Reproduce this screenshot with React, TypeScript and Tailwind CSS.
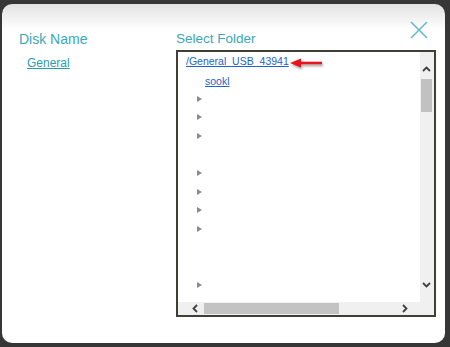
import React from "react";

const rows = [true, true, true, false, true, true, true, true, false, false, true];

function Tri() {
  return (
    <div className="w-0 h-0 border-l-[5px] border-l-[#8a8a8a] border-y-[3.5px] border-y-transparent" />
  );
}

export default function App() {
  return (
    <div className="w-[450px] h-[347px] bg-[#363636] pt-[4px] pl-[2px] pr-[5px] pb-[4px] font-['Liberation_Sans',Arial,sans-serif]">
      <div className="relative h-full w-full rounded-[10px] bg-[linear-gradient(to_bottom,#e2e2e2,#ffffff_26px,#ffffff)] flex pl-[17px] pt-[27px]">
        {/* Left column */}
        <div className="w-[157px] flex flex-col">
          <div className="text-[14px] leading-[16px] text-[#3aa8b7]">Disk Name</div>
          <div className="mt-[8.5px] pl-[8px] text-[12px] leading-[14px] text-[#2c9dac] underline">General</div>
        </div>

        {/* Right column */}
        <div className="w-[260px] flex flex-col">
          <div className="text-[13.5px] leading-[16px] text-[#3aa8b7]">Select Folder</div>
          <div className="mt-[3px] h-[267px] border-2 border-[#3f3f35] flex flex-col bg-white">
            <div className="flex flex-1 min-h-0">
              {/* Tree content */}
              <div className="flex-1 overflow-hidden flex flex-col text-[10.5px] leading-[13px]">
                <div className="mt-[2px] pl-[8px] flex items-center">
                  <span className="text-[#2463c8] underline">/General_USB_43941</span>
                  <svg width="33" height="12" viewBox="0 0 33 12" className="ml-[1px] mt-[3px] drop-shadow-[1px_2px_1px_rgba(0,0,0,0.35)]">
                    <polygon points="0,6 11,1.5 11,10.5" fill="#e8141b" />
                    <rect x="10" y="4.7" width="22" height="2.6" fill="#e8141b" />
                  </svg>
                </div>
                <div className="mt-[6px] pl-[27px]">
                  <span className="text-[#2463c8] underline">sookl</span>
                </div>
                <div className="mt-[1.2px] flex flex-col">
                  {rows.map((r, i) => (
                    <div key={i} className="h-[18.66px] pl-[19px] flex items-center">
                      {r ? <Tri /> : null}
                    </div>
                  ))}
                </div>
              </div>
              {/* Vertical scrollbar */}
              <div className="w-[14px] bg-[#f0f0f0] flex flex-col items-center">
                <svg width="9" height="6" viewBox="0 0 9 6" className="mt-[14px] mr-[1px]">
                  <polyline points="1,5 4.5,1.5 8,5" fill="none" stroke="#404040" strokeWidth="1.8" />
                </svg>
                <div className="mt-[7px] ml-[-1px] w-[11px] h-[33px] bg-[#c1c1c1]" />
                <div className="flex-1" />
                <svg width="9" height="6" viewBox="0 0 9 6" className="mr-[1px]">
                  <polyline points="1,1 4.5,4.5 8,1" fill="none" stroke="#404040" strokeWidth="1.8" />
                </svg>
                <div className="h-[14px]" />
              </div>
            </div>
            {/* Horizontal scrollbar */}
            <div className="h-[13px] flex bg-[#f0f0f0]">
              <div className="w-[242px] flex items-center">
                <svg width="6" height="9" viewBox="0 0 6 9" className="ml-[14px]">
                  <polyline points="5,1 1.5,4.5 5,8" fill="none" stroke="#404040" strokeWidth="1.8" />
                </svg>
                <div className="ml-[6px] w-[135px] h-[11px] bg-[#c3c3c3]" />
                <div className="flex-1" />
                <svg width="6" height="9" viewBox="0 0 6 9" className="mr-[12px]">
                  <polyline points="1,1 4.5,4.5 1,8" fill="none" stroke="#404040" strokeWidth="1.8" />
                </svg>
              </div>
              <div className="flex-1" />
            </div>
          </div>
        </div>

        {/* Close button */}
        <svg width="18" height="18" viewBox="0 0 18 18" className="absolute left-[408px] top-[17px]">
          <line x1="1" y1="1" x2="17" y2="17" stroke="#5cb8c5" strokeWidth="1.5" />
          <line x1="17" y1="1" x2="1" y2="17" stroke="#5cb8c5" strokeWidth="1.5" />
        </svg>
      </div>
    </div>
  );
}
